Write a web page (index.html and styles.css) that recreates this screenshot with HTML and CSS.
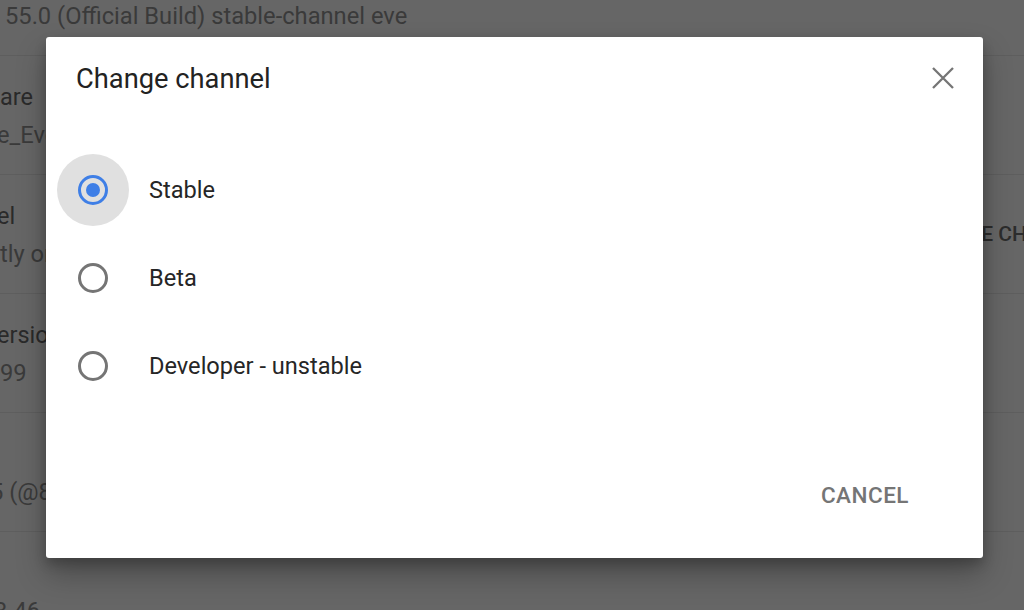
FILE: index.html
```html
<!DOCTYPE html>
<html lang="en">
<head>
<meta charset="utf-8">
<title>Change channel</title>
<link rel="stylesheet" href="styles.css">
</head>
<body>
<div class="page">
  <div class="row">
    <div class="info">
      <div class="label">Platform</div>
      <div class="value pad">55.0 (Official Build) stable-channel eve</div>
    </div>
  </div>
  <div class="row">
    <div class="info">
      <div class="label">are</div>
      <div class="value cut-s">e_Eve.9584.107.0</div>
    </div>
  </div>
  <div class="row">
    <div class="info">
      <div class="label cut-s">el</div>
      <div class="value">tly on stable</div>
    </div>
    <button class="change">CHANGE CHANNEL</button>
  </div>
  <div class="row">
    <div class="info">
      <div class="label cut-s">ersion</div>
      <div class="value">99</div>
    </div>
  </div>
  <div class="row">
    <div class="info">
      <div class="label hidden">Kernel</div>
      <div class="value cut-l">5 (@8</div>
    </div>
  </div>
  <div class="row">
    <div class="info">
      <div class="label hidden">Build</div>
      <div class="value cut-m">3.46</div>
    </div>
  </div>
</div>

<div class="dialog" role="dialog" aria-label="Change channel">
  <div class="dialog-head">
    <h1 class="dialog-title">Change channel</h1>
    <button class="close" aria-label="Close">
      <svg width="22" height="22" viewBox="0 0 22 22"><path d="M1 1 L21 21 M21 1 L1 21" stroke="#757575" stroke-width="2.3" fill="none"/></svg>
    </button>
  </div>
  <div class="options">
    <div class="option">
      <span class="ripple active"><span class="radio checked"><span class="dot"></span></span></span>
      <span class="opt-label">Stable</span>
    </div>
    <div class="option">
      <span class="ripple"><span class="radio"></span></span>
      <span class="opt-label">Beta</span>
    </div>
    <div class="option">
      <span class="ripple"><span class="radio"></span></span>
      <span class="opt-label">Developer - unstable</span>
    </div>
  </div>
  <div class="dialog-foot">
    <button class="cancel">CANCEL</button>
  </div>
</div>
</body>
</html>
```

FILE: styles.css
```css
* { box-sizing: border-box; }
html, body {
  margin: 0;
  padding: 0;
  width: 1024px;
  height: 610px;
  overflow: hidden;
  background: #666666;
  font-family: Roboto, "Liberation Sans", Arial, sans-serif;
}
.page {
  width: 1100px;
  margin-top: -63px;
}
.row {
  display: flex;
  height: 119px;
  border-bottom: 1px solid #5e5e5e;
}
.info {
  padding-top: 27px;
  flex: 1;
  min-width: 0;
}
.label {
  font-size: 23.5px;
  line-height: 28px;
  color: #2a2a2a;
  white-space: nowrap;
}
.value {
  margin-top: 10px;
  font-size: 23.7px;
  line-height: 28px;
  color: #3a3a3a;
  white-space: nowrap;
}
.hidden { visibility: hidden; }
.pad { padding-left: 5px; }
.cut-s { margin-left: -3px; }
.cut-m { margin-left: -6px; }
.cut-l { margin-left: -10px; }
.change {
  align-self: center;
  margin-right: 6px;
  border: 0;
  background: none;
  padding: 0;
  font-family: inherit;
  font-size: 21px;
  font-weight: 500;
  color: #2c2c2c;
  white-space: nowrap;
}

.dialog {
  position: absolute;
  left: 46px;
  top: 37px;
  width: 937px;
  height: 521px;
  background: #ffffff;
  border-radius: 3px;
  box-shadow: 0 16px 30px rgba(0, 0, 0, 0.28), 0 6px 12px rgba(0, 0, 0, 0.2);
  display: flex;
  flex-direction: column;
}
.dialog-head {
  display: flex;
  align-items: center;
  justify-content: space-between;
  height: 82px;
  padding: 0 29px 0 30px;
}
.dialog-title {
  margin: 0;
  font-size: 27.3px;
  font-weight: 400;
  color: #222222;
  line-height: 32px;
  padding-top: 2px;
}
.close {
  border: 0;
  background: none;
  padding: 0;
  width: 22px;
  height: 22px;
  display: flex;
}
.options {
  margin-top: 27px;
  padding-left: 11px;
}
.option {
  display: flex;
  align-items: center;
  height: 88px;
}
.ripple {
  width: 72px;
  height: 72px;
  border-radius: 50%;
  display: flex;
  align-items: center;
  justify-content: center;
}
.ripple.active { background: #e0e0e0; }
.radio {
  width: 30px;
  height: 30px;
  border-radius: 50%;
  border: 3px solid #757575;
  display: flex;
  align-items: center;
  justify-content: center;
}
.radio.checked { border-color: #3f7fe6; }
.dot {
  width: 14px;
  height: 14px;
  border-radius: 50%;
  background: #3f7fe6;
}
.opt-label {
  margin-left: 20px;
  font-size: 23.6px;
  color: #262626;
}
.dialog-foot {
  margin-top: auto;
  display: flex;
  justify-content: flex-end;
  padding: 0 58px 39px 0;
}
.cancel {
  border: 0;
  background: none;
  height: 48px;
  padding: 0 16px;
  font-family: inherit;
  font-size: 22.5px;
  font-weight: 500;
  letter-spacing: 0.5px;
  color: #757575;
}
```
